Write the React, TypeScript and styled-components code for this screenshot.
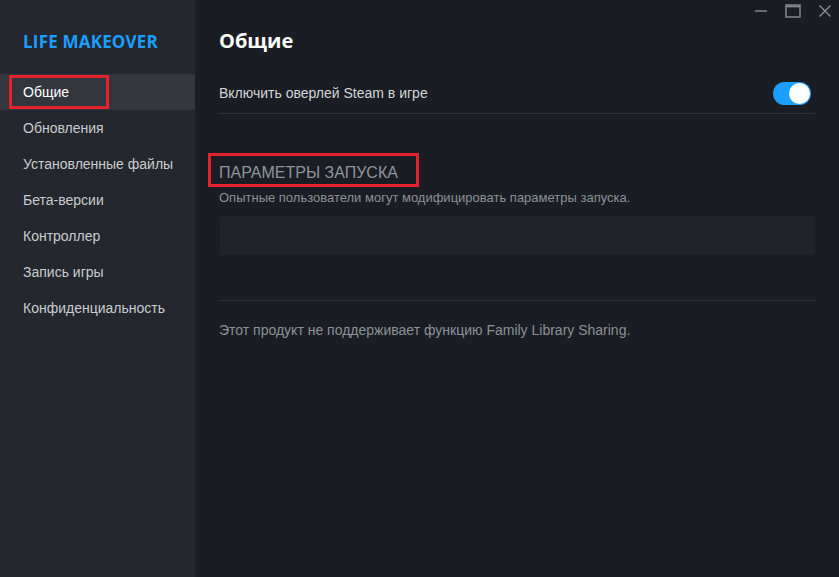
import React from "react";
import styled, { createGlobalStyle } from "styled-components";

const GlobalStyle = createGlobalStyle`
  html, body {
    margin: 0;
    padding: 0;
    background: #1a1d23;
    font-family: "Liberation Sans", Arial, sans-serif;
  }
`;

const navItems: string[] = [
  "Общие",
  "Обновления",
  "Установленные файлы",
  "Бета-версии",
  "Контроллер",
  "Запись игры",
  "Конфиденциальность",
];

const App = () => {
  const active = 0;
  return (
    <>
      <GlobalStyle />
      <Window>
        <Sidebar>
          <GameTitle>LIFE MAKEOVER</GameTitle>
          <NavList>
            {navItems.map((item, idx) => (
              <NavItem key={item} $active={idx === active}>
                {idx === active ? <Marked $pad="5px 37px 5px 11px">{item}</Marked> : item}
              </NavItem>
            ))}
          </NavList>
        </Sidebar>
        <Main>
          <TitleBar>
            <WinButton aria-label="minimize">
              <svg width="14" height="14" viewBox="0 0 14 14">
                <line x1="1" y1="7" x2="13" y2="7" stroke="#8a8f96" strokeWidth="1.4" />
              </svg>
            </WinButton>
            <WinButton aria-label="maximize">
              <svg width="16" height="14" viewBox="0 0 16 14">
                <rect x="1" y="1" width="14" height="12" fill="none" stroke="#8a8f96" strokeWidth="1.4" />
                <line x1="1" y1="2.5" x2="15" y2="2.5" stroke="#8a8f96" strokeWidth="1.6" />
              </svg>
            </WinButton>
            <WinButton aria-label="close">
              <svg width="14" height="14" viewBox="0 0 14 14">
                <path d="M1.5 1.5 L12.5 12.5 M12.5 1.5 L1.5 12.5" stroke="#8a8f96" strokeWidth="1.4" />
              </svg>
            </WinButton>
          </TitleBar>
          <Content>
            <PageTitle>Общие</PageTitle>
            <SettingRow>
              <SettingLabel>Включить оверлей Steam в игре</SettingLabel>
              <Toggle $on>
                <Knob />
              </Toggle>
            </SettingRow>
            <Section>
              <SectionHead>
                <Marked $pad="8px 18px 2px 8px">ПАРАМЕТРЫ ЗАПУСКА</Marked>
              </SectionHead>
              <Hint>Опытные пользователи могут модифицировать параметры запуска.</Hint>
              <LaunchInput />
            </Section>
            <Divider />
            <Footnote>Этот продукт не поддерживает функцию Family Library Sharing.</Footnote>
          </Content>
        </Main>
      </Window>
    </>
  );
};

const Window = styled.div({
  display: "flex",
  width: "839px",
  height: "577px",
  overflow: "hidden",
});

const Sidebar = styled.div({
  width: "195px",
  flexShrink: 0,
  background: "#24272d",
  display: "flex",
  flexDirection: "column",
});

const GameTitle = styled.div({
  color: "#1a9fff",
  fontFamily: "\"Open Sans\", \"Liberation Sans\", sans-serif",
  fontWeight: 700,
  fontSize: "17px",
  letterSpacing: "0.2px",
  padding: "31px 0 0 23px",
  height: "43px",
  boxSizing: "border-box",
  lineHeight: "22px",
  marginBottom: "31px",
});

const NavList = styled.div({
  display: "flex",
  flexDirection: "column",
});

const NavItem = styled.div<{ $active?: boolean }>(({ $active }) => ({
  height: "36px",
  display: "flex",
  alignItems: "center",
  paddingLeft: $active ? "9px" : "23px",
  fontSize: "14px",
  color: $active ? "#ffffff" : "#c9ccd0",
  background: $active ? "#33363d" : "transparent",
}));

const Marked = styled.span<{ $pad: string }>(({ $pad }) => ({
  border: "3px solid #e3222b",
  padding: $pad,
  display: "inline-block",
  lineHeight: "18px",
}));

const Main = styled.div({
  flex: 1,
  display: "flex",
  flexDirection: "column",
  background: "#1a1d23",
});

const TitleBar = styled.div({
  display: "flex",
  justifyContent: "flex-end",
  alignItems: "center",
  height: "22px",
  gap: "16px",
  paddingRight: "6px",
});

const WinButton = styled.div({
  width: "16px",
  height: "16px",
  display: "flex",
  alignItems: "center",
  justifyContent: "center",
});

const Content = styled.div({
  padding: "6px 24px 0 24px",
  display: "flex",
  flexDirection: "column",
});

const PageTitle = styled.h1({
  margin: 0,
  color: "#ffffff",
  fontFamily: "\"Open Sans\", \"Liberation Sans\", sans-serif",
  fontWeight: 700,
  fontSize: "20px",
  lineHeight: "26px",
});

const SettingRow = styled.div({
  display: "flex",
  justifyContent: "space-between",
  alignItems: "center",
  marginTop: "19px",
  height: "40px",
  borderBottom: "1px solid #2e3138",
  paddingRight: "4px",
});

const SettingLabel = styled.div({
  fontSize: "14px",
  color: "#d4d6d9",
});

const Toggle = styled.div<{ $on?: boolean }>(({ $on }) => ({
  width: "38px",
  height: "23px",
  borderRadius: "12px",
  background: $on ? "#1a9fff" : "#4a4e56",
  display: "flex",
  alignItems: "center",
  justifyContent: $on ? "flex-end" : "flex-start",
  padding: "1px",
  boxSizing: "border-box",
}));

const Knob = styled.div({
  width: "21px",
  height: "21px",
  borderRadius: "50%",
  background: "#ffffff",
});

const Section = styled.div({
  marginTop: "39px",
  display: "flex",
  flexDirection: "column",
});

const SectionHead = styled.div({
  marginLeft: "-11px",
  fontSize: "16px",
  color: "#8f959c",
  fontFamily: "\"Liberation Sans\", sans-serif",
});

const Hint = styled.div({
  marginTop: "3px",
  fontSize: "13px",
  color: "#8b9197",
});

const LaunchInput = styled.div({
  marginTop: "11px",
  height: "39px",
  background: "#20232a",
  borderRadius: "2px",
  marginLeft: "1px",
});

const Divider = styled.div({
  marginTop: "45px",
  height: "1px",
  background: "#2c2f36",
});

const Footnote = styled.div({
  marginTop: "21px",
  fontSize: "14px",
  color: "#8b9197",
});

export default App;
